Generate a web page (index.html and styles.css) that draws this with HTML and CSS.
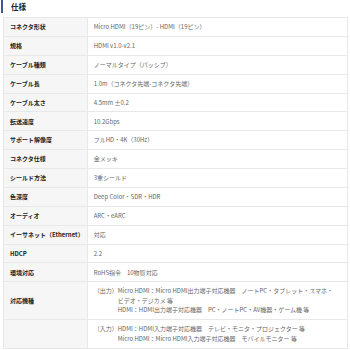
FILE: index.html
```html
<!DOCTYPE html>
<html lang="ja">
<head>
<meta charset="utf-8">
<link rel="stylesheet" href="styles.css">
</head>
<body>
<div class="page">
  <h2 class="title">仕様</h2>
  <table class="spec">
    <tr><th>コネクタ形状</th><td>Micro HDMI（19ピン）- HDMI（19ピン）</td></tr>
    <tr><th>規格</th><td>HDMI v1.0-v2.1</td></tr>
    <tr><th>ケーブル種類</th><td>ノーマルタイプ（パッシブ）</td></tr>
    <tr><th>ケーブル長</th><td>1.0m（コネクタ先端-コネクタ先端）</td></tr>
    <tr><th>ケーブル太さ</th><td>4.5mm ±0.2</td></tr>
    <tr><th>転送速度</th><td>10.2Gbps</td></tr>
    <tr><th>サポート解像度</th><td>フルHD・4K（30Hz）</td></tr>
    <tr><th>コネクタ仕様</th><td>金メッキ</td></tr>
    <tr><th>シールド方法</th><td>3重シールド</td></tr>
    <tr><th>色深度</th><td>Deep Color・SDR・HDR</td></tr>
    <tr><th>オーディオ</th><td>ARC・eARC</td></tr>
    <tr><th>イーサネット（Ethernet）</th><td>対応</td></tr>
    <tr><th>HDCP</th><td>2.2</td></tr>
    <tr><th>環境対応</th><td>RoHS指令　10物質対応</td></tr>
    <tr><th>対応機種</th><td><div class="hang"><span class="tag">（出力）</span><span class="lines">Micro HDMI：Micro HDMI出力端子対応機器　ノートPC・タブレット・スマホ・<br>ビデオ・デジカメ 等<br>HDMI：HDMI出力端子対応機器　PC・ノートPC・AV機器・ゲーム機 等</span></div></td></tr>
    <tr><th></th><td><div class="hang"><span class="tag">（入力）</span><span class="lines">HDMI：HDMI入力端子対応機器　テレビ・モニタ・プロジェクター 等<br>Micro HDMI：Micro HDMI入力端子対応機器　モバイルモニター 等</span></div></td></tr>
  </table>
</div>
</body>
</html>
```

FILE: styles.css
```css
html, body {
  margin: 0;
  padding: 0;
  background: #ffffff;
}
body {
  font-family: "Noto Sans CJK JP", "Noto Sans", sans-serif;
}
.page {
  padding: 0 2px 0 3px;
}
.title {
  margin: 0 0 4px -2px;
  height: 13px;
  line-height: 13px;
  border-left: 2px solid #3b5a9c;
  padding-left: 8px;
  font-size: 7.5px;
  font-weight: bold;
  color: #222222;
}
.spec {
  width: 100%;
  border-collapse: collapse;
  border: 1px solid #e8e8e8;
  font-size: 6px;
  line-height: 9.5px;
}
.spec th,
.spec td {
  border-top: 1px solid #e8e8e8;
  padding: 4.2px 6px;
  text-align: left;
  vertical-align: middle;
}
.spec th {
  width: 68px;
  padding-right: 3px;
  white-space: nowrap;
  background: #f6f6f6;
  color: #222222;
  font-weight: bold;
  border-right: 1px solid #e8e8e8;
}
.spec td {
  color: #666666;
  font-weight: normal;
}
.hang {
  display: flex;
}
.tag {
  flex: none;
  width: 24px;
}
.lines {
  display: block;
  white-space: nowrap;
}
```
